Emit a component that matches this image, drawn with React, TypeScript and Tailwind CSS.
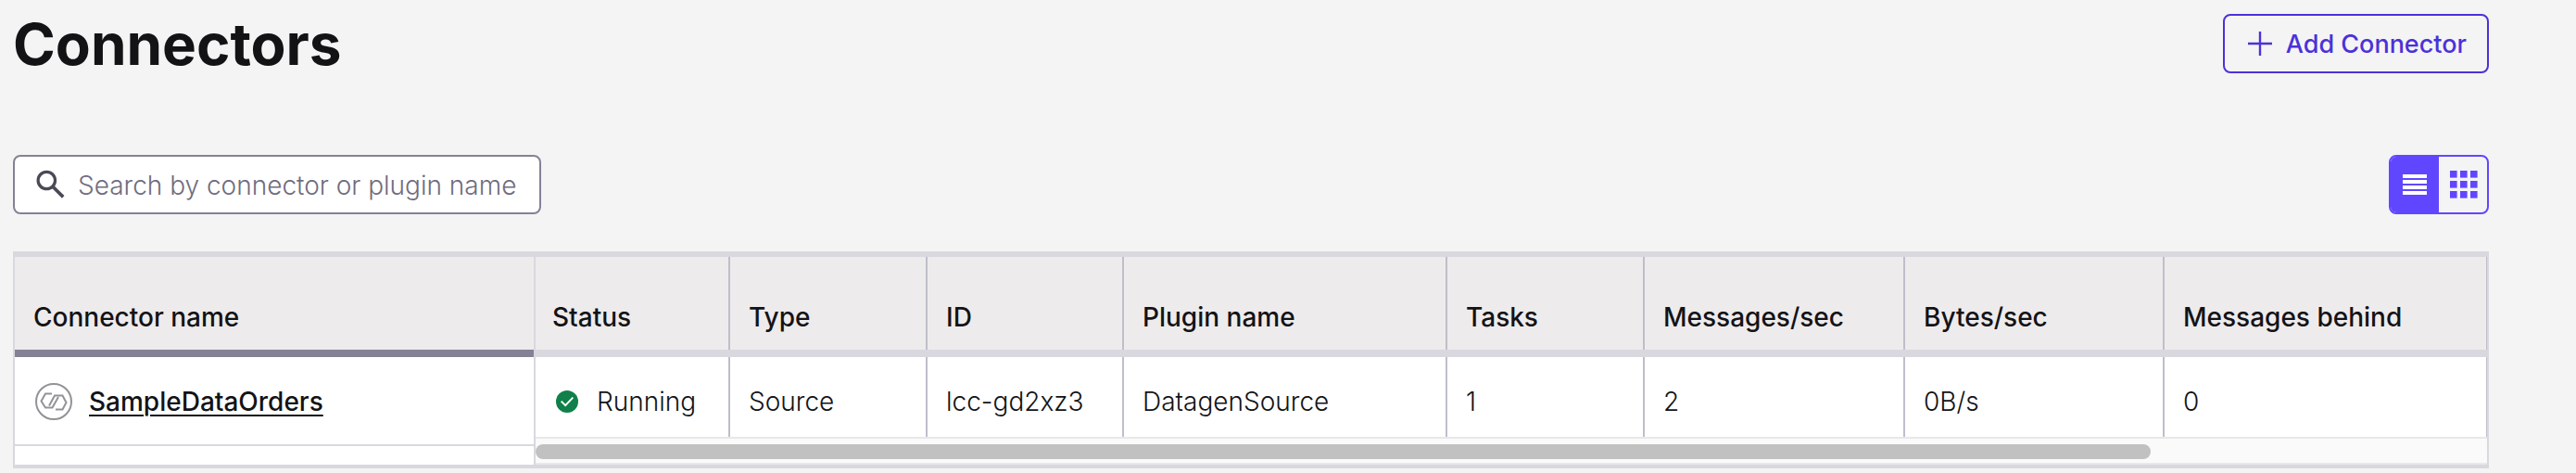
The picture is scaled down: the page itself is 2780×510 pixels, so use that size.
import { useState } from "react";

const columns = [
  { key: "status", label: "Status", width: "w-[210px]" },
  { key: "type", label: "Type", width: "w-[213px]" },
  { key: "id", label: "ID", width: "w-[212px]" },
  { key: "plugin", label: "Plugin name", width: "w-[349px]" },
  { key: "tasks", label: "Tasks", width: "w-[213px]" },
  { key: "messages", label: "Messages/sec", width: "w-[281px]" },
  { key: "bytes", label: "Bytes/sec", width: "w-[280px]" },
  { key: "behind", label: "Messages behind", width: "" },
];

const connectors = [
  {
    name: "SampleDataOrders",
    status: "Running",
    type: "Source",
    id: "lcc-gd2xz3",
    plugin: "DatagenSource",
    tasks: "1",
    messages: "2",
    bytes: "0B/s",
    behind: "0",
  },
];

function SearchIcon() {
  return (
    <svg className="w-10 h-10 shrink-0" viewBox="0 0 40 40" fill="none" stroke="#4b4857" aria-hidden="true">
      <circle cx="16.3" cy="15.5" r="9.2" strokeWidth="3.2" />
      <path d="M22.5 21.8L34.2 33.4" strokeWidth="3.6" />
    </svg>
  );
}

function ConnectorLogo() {
  return (
    <svg className="w-10 h-10 shrink-0" viewBox="0 0 40 40" fill="none" stroke="#939397" aria-hidden="true">
      <circle cx="20" cy="20" r="19" strokeWidth="2" />
      <path d="M18 11.5H11L6.5 19.5L11 26.5H18.5L25 15" strokeWidth="2" />
      <path d="M15 24.5L21 13.5H29.5L33.5 21L29.5 28.5H22" strokeWidth="2" />
    </svg>
  );
}

function StatusIcon() {
  return (
    <svg className="w-6 h-6 shrink-0" viewBox="0 0 24 24" fill="none" aria-hidden="true">
      <circle cx="12" cy="12" r="12" fill="#0f8049" />
      <path d="M5.7 11.6L10.2 16.1L18.3 7.6" stroke="#fff" strokeWidth="2" />
    </svg>
  );
}

export default function App() {
  const [query, setQuery] = useState("");
  const [view, setView] = useState("list");

  return (
    <main className="min-h-screen bg-[#f4f4f4] pl-3.5 pr-[94px] pt-[15px] font-['Inter',sans-serif] text-[28px] leading-10 text-[#131316]">
      <header className="flex items-start justify-between">
        <h1 className="text-[62px] leading-[66px] font-bold">Connectors</h1>
        <button className="flex h-16 items-center gap-3 rounded-lg border-2 border-[#4a32d8] px-[22px] text-[27px] font-medium text-[#4a32d8]">
          <svg className="w-8 h-8" viewBox="0 0 32 32" stroke="currentColor" strokeWidth="2.4" aria-hidden="true">
            <path d="M16 3V29M3 16H29" />
          </svg>
          <span className="pt-0.5">Add Connector</span>
        </button>
      </header>

      <div className="mt-[86px] flex items-center justify-between">
        <div className="flex h-16 w-[570px] items-center gap-2.5 rounded-lg border-2 border-[#858195] bg-white pl-[18px] pr-2">
          <SearchIcon />
          <input
            type="text"
            aria-label="Search by connector or plugin name"
            className="h-full min-w-0 flex-1 bg-transparent pt-0.5 font-light outline-none placeholder:text-[#706c80]"
            placeholder="Search by connector or plugin name"
            value={query}
            onChange={(e) => setQuery(e.target.value)}
          />
        </div>

        {/* List / grid switch */}
        <div className="flex h-16 w-27 overflow-hidden rounded-lg border-2 border-[#6047ff]">
          <button
            aria-label="List view"
            aria-pressed={view === "list"}
            onClick={() => setView("list")}
            className="flex flex-1 items-center justify-center bg-[#6047ff]"
          >
            <svg className="w-[26px] h-[22px]" viewBox="0 0 26 22" fill="#fff" aria-hidden="true">
              <path d="M0 0h26v4H0zM0 6h26v4H0zM0 12h26v4H0zM0 18h26v4H0z" />
            </svg>
          </button>
          <button
            aria-label="Grid view"
            aria-pressed={view === "grid"}
            onClick={() => setView("grid")}
            className="flex flex-1 items-center justify-center"
          >
            <svg className="w-8 h-[30px]" viewBox="0 0 32 30" fill="#6047ff" aria-hidden="true">
              {[0, 11, 22].map((y) =>
                [2, 13, 24].map((x) => <rect key={`${x}-${y}`} x={x} y={y} width="7.6" height="7.6" />)
              )}
            </svg>
          </button>
        </div>
      </div>

      <section className="mt-10 flex border-x-2 border-t-6 border-b-4 border-[#d9d8df] bg-white">
        {/* Pinned name column */}
        <div className="w-[562px] shrink-0 border-r-2 border-[#d9d8df]">
          <table className="w-full border-separate border-spacing-0">
            <thead>
              <tr>
                <th className="border-b-8 border-[#858195] bg-[#eeebec] p-0 text-left font-medium">
                  <div className="flex h-25 items-end px-5 pb-[15px]">Connector name</div>
                </th>
              </tr>
            </thead>
            <tbody>
              {connectors.map((c) => (
                <tr key={c.id}>
                  <td className="border-b-2 border-[#d9d8df] p-0">
                    <div className="flex h-[94px] items-start gap-[18px] pl-[22px] pt-7">
                      <ConnectorLogo />
                      <a href="#" className="font-medium underline decoration-2 underline-offset-4">
                        {c.name}
                      </a>
                    </div>
                  </td>
                </tr>
              ))}
            </tbody>
          </table>
        </div>

        {/* Scrolling columns */}
        <div className="min-w-0 flex-1 overflow-hidden">
          <table className="w-full table-fixed border-separate border-spacing-0">
            <thead>
              <tr>
                {columns.map((col) => (
                  <th
                    key={col.key}
                    className={`${col.width} group border-b-8 border-[#d9d8df] bg-[#eeebec] p-0 text-left font-medium`}
                  >
                    <div className="flex h-25 items-end border-r-2 border-[#bfbecb] pb-[15px] pl-5 group-first:pl-[18px] group-last:border-r">
                      {col.label}
                    </div>
                  </th>
                ))}
              </tr>
            </thead>
            <tbody>
              {connectors.map((c) => (
                <tr key={c.id}>
                  {columns.map((col) => (
                    <td key={col.key} className="group p-0 font-light">
                      <div className="flex h-[86px] items-start border-r-2 border-[#bfbecb] pl-5 pt-7 group-first:pl-[22px] group-last:border-r">
                        {col.key === "status" ? (
                          <span className="flex items-center gap-5">
                            <StatusIcon />
                            {c.status}
                          </span>
                        ) : (
                          c[col.key as keyof typeof c]
                        )}
                      </div>
                    </td>
                  ))}
                </tr>
              ))}
            </tbody>
          </table>
          <div className="border-y-2 border-[#e8e8e8] bg-[#fafafa] pt-1.5 pb-1">
            <div className="h-4 w-[calc(100%-363px)] rounded-full bg-[#c1c1c1]"></div>
          </div>
        </div>
      </section>
    </main>
  );
}
